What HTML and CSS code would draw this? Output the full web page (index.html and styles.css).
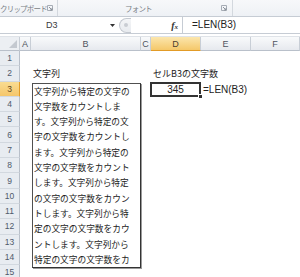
FILE: index.html
```html
<!DOCTYPE html>
<html lang="ja">
<head>
    <meta charset="UTF-8">
    <title>LEN関数</title>
    <link rel="stylesheet" href="styles.css">
</head>
<body>
    <div class="ribbon">
        <div class="group clip">
            <span class="group-name">クリップボード</span>
            <svg class="launcher" width="6" height="6" viewBox="0 0 6 6"><path d="M0.5 0.5h5v5h-5z" fill="none" stroke="#a6acb5"/><path d="M2 2l3 3M5 3v2h-2" fill="none" stroke="#8c939c"/></svg>
        </div>
        <div class="group font">
            <span class="group-name">フォント</span>
            <svg class="launcher" width="6" height="6" viewBox="0 0 6 6"><path d="M0.5 0.5h5v5h-5z" fill="none" stroke="#a6acb5"/><path d="M2 2l3 3M5 3v2h-2" fill="none" stroke="#8c939c"/></svg>
        </div>
        <div class="group rest"></div>
    </div>

    <div class="fbar">
        <div class="namebox">
            <span class="name">D3</span>
            <svg class="drop" width="5" height="3" viewBox="0 0 5 3"><path d="M0 0h5l-2.5 3z" fill="#333"/></svg>
        </div>
        <div class="fx-area">
            <div class="pill"><span class="knob"></span></div>
            <span class="fx"><i>f</i><small>x</small></span>
        </div>
        <div class="formula">=LEN(B3)</div>
    </div>

    <div class="sheet">
        <div class="ch corner"><span class="tri"></span></div>
        <div class="ch">A</div>
        <div class="ch">B</div>
        <div class="ch">C</div>
        <div class="ch sel">D</div>
        <div class="ch">E</div>
        <div class="ch">F</div>

        <div class="rh">1</div>
        <div class="rh">2</div>
        <div class="rh sel">3</div>
        <div class="rh">4</div>
        <div class="rh">5</div>
        <div class="rh">6</div>
        <div class="rh">7</div>
        <div class="rh">8</div>
        <div class="rh">9</div>
        <div class="rh">10</div>
        <div class="rh">11</div>
        <div class="rh">12</div>
        <div class="rh">13</div>
        <div class="rh">14</div>
        <div class="rh">15</div>

        <div class="cell title-b">文字列</div>
        <div class="textbox">
            <div class="line">文字列から特定の文字の</div>
            <div class="line">文字数をカウントしま</div>
            <div class="line">す。文字列から特定の文</div>
            <div class="line">字の文字数をカウントし</div>
            <div class="line">ます。文字列から特定の</div>
            <div class="line">文字の文字数をカウント</div>
            <div class="line">します。文字列から特定</div>
            <div class="line">の文字の文字数をカウン</div>
            <div class="line">トします。文字列から特</div>
            <div class="line">定の文字の文字数をカウ</div>
            <div class="line">ントします。文字列から</div>
            <div class="line">特定の文字の文字数をカ</div>
        </div>
        <div class="cell title-d">セルB3の文字数</div>
        <div class="cell active">345<span class="handle"></span></div>
        <div class="cell formula-e">=LEN(B3)</div>
    </div>
</body>
</html>
```

FILE: styles.css
```css
/* Excel 2010 風の画面 */
* {
    box-sizing: border-box;
}

body {
    margin: 0;
    width: 300px;
    height: 277px;
    overflow: hidden;
    background-color: #ffffff;
    font-family: "Liberation Sans", "Noto Sans CJK JP", sans-serif;
    color: #222222;
}

/* リボンの下端 */
.ribbon {
    display: flex;
    height: 17px;
    background: linear-gradient(#f7f8fa, #eef1f5);
    border-bottom: 1px solid #c6ccd4;
}

.group {
    display: flex;
    align-items: center;
    height: 16px;
    border-right: 1px solid #d3d8de;
    font-size: 7.5px;
    color: #7a7f86;
    white-space: nowrap;
}

.group-name {
    font-family: "Noto Sans CJK JP", sans-serif;
    letter-spacing: -0.8px;
}

.clip {
    width: 58px;
    padding-left: 0;
    padding-right: 4px;
}

.font {
    width: 175px;
    padding-left: 67px;
    padding-right: 5px;
}

.font .launcher,
.clip .launcher {
    margin-left: auto;
}

.rest {
    flex: 1;
    border-right: none;
}

/* 数式バー */
.fbar {
    display: flex;
    height: 17px;
    background-color: #ffffff;
    border-bottom: 1px solid #c6ccd4;
}

.namebox {
    display: flex;
    align-items: center;
    width: 119px;
    padding-right: 4px;
    font-size: 9px;
}

.name {
    margin-left: 46px;
    color: #3b3b3b;
}

.drop {
    margin-left: auto;
}

.fx-area {
    display: flex;
    align-items: center;
    width: 64px;
    padding-right: 4px;
    background-color: #ffffff;
    border-right: 1px solid #c6ccd4;
}

.pill {
    width: 12px;
    height: 15px;
    border: 1px solid #c4c9d0;
    border-right: none;
    border-radius: 8px 0 0 8px;
    background: linear-gradient(#f4f5f7, #e8ebef);
    display: flex;
    align-items: center;
    justify-content: center;
}

.knob {
    width: 4px;
    height: 4px;
    border-radius: 50%;
    background-color: #c9cdd3;
}

.fx {
    margin-left: auto;
    font-family: "Liberation Serif", serif;
    font-weight: bold;
    font-size: 10px;
    color: #333333;
}

.fx small {
    font-size: 7px;
    font-style: italic;
}

.formula {
    padding-left: 9px;
    font-size: 10px;
    line-height: 16px;
    color: #222222;
}

/* シート */
.sheet {
    display: grid;
    grid-template-columns: 20px 11px 110px 10px 50px 50px 49px;
    grid-template-rows: 14px repeat(15, 15.3px);
    margin-top: 2px;
    border-top: 1px solid #dfe3e8;
    background-color: #ffffff;
}

.ch {
    display: flex;
    align-items: center;
    justify-content: center;
    font-size: 9px;
    color: #4f5560;
    background: linear-gradient(#f9fafb, #e6e9ee);
    border-right: 1px solid #c8ced6;
    border-bottom: 1px solid #b9c0ca;
}

.ch.sel {
    background: linear-gradient(#fbe6ad, #f5c86a);
    border-bottom: 1px solid #e29b26;
    color: #4a4030;
}

.corner {
    position: relative;
    background: #eceff3;
}

.tri {
    position: absolute;
    right: 2px;
    bottom: 2px;
    width: 0;
    height: 0;
    border-left: 8px solid transparent;
    border-bottom: 8px solid #c4c9d0;
}

.rh {
    grid-column: 1;
    display: flex;
    align-items: center;
    justify-content: center;
    font-size: 8.5px;
    color: #4f5a6b;
    background-color: #e8ecf1;
    border-right: 1px solid #b9c0ca;
    border-bottom: 1px solid #d2d8df;
}

.rh.sel {
    background: linear-gradient(#f9dc92, #f5c66a);
    border-right: 1px solid #e29b26;
    color: #5a4520;
}

.cell {
    font-family: "Noto Sans CJK JP", sans-serif;
    font-size: 9px;
    line-height: 15px;
    white-space: nowrap;
}

.title-b {
    grid-row: 3;
    grid-column: 3;
    padding-left: 2px;
}

.title-d {
    grid-row: 3;
    grid-column: 5 / 8;
    padding-left: 2px;
}

.textbox {
    grid-row: 4 / 16;
    grid-column: 3;
    margin: 1px 0 0 1px;
    border: 1px solid #505050;
    border-right-color: #333333;
    border-bottom-color: #333333;
    box-shadow: 1px 1px 0 #9a9a9a;
    padding-left: 1px;
    align-self: start;
}

.line {
    height: 15.3px;
    font-family: "Noto Sans CJK JP", sans-serif;
    font-size: 8.7px;
    line-height: 15px;
    white-space: nowrap;
    overflow: hidden;
}

.active {
    position: relative;
    grid-row: 4;
    grid-column: 5;
    margin-left: -1px;
    border: 2px solid #333333;
    font-family: "Liberation Sans", sans-serif;
    font-size: 10px;
    line-height: 11px;
    text-align: center;
}

.handle {
    position: absolute;
    right: -4px;
    bottom: -4px;
    width: 5px;
    height: 5px;
    background-color: #333333;
    border: 1px solid #ffffff;
}

.formula-e {
    grid-row: 4;
    grid-column: 6 / 8;
    padding-left: 2px;
    font-family: "Liberation Sans", sans-serif;
    font-size: 10px;
}
```
